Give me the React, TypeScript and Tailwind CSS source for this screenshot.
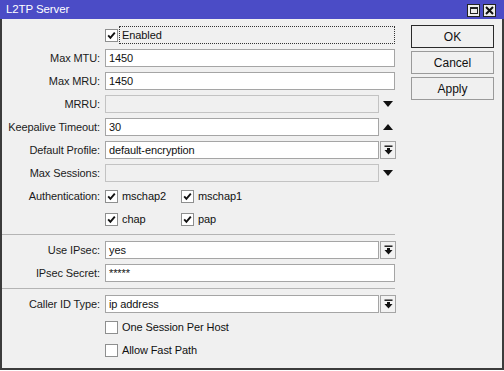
import React from "react";

const font = { fontFamily: '"Liberation Sans", Arial, sans-serif' };

function CheckBox({ checked }: { checked?: boolean }) {
    return (
        <div className="w-[13px] h-[13px] border border-[#8e8f8f] bg-white flex items-center justify-center shrink-0">
            {checked && (
                <svg width="9" height="9" viewBox="0 0 9 9">
                    <path d="M1.2 4.4 L3.4 6.8 L7.8 1.6" fill="none" stroke="#111" strokeWidth="1.9" />
                </svg>
            )}
        </div>
    );
}

function DropIcon() {
    return (
        <svg width="9" height="10" viewBox="0 0 9 10">
            <rect x="0.5" y="0.5" width="8" height="1.4" fill="#111" />
            <rect x="3" y="3" width="3" height="2.5" fill="#111" />
            <path d="M0.5 5 H8.5 L4.5 9.5 Z" fill="#111" />
        </svg>
    );
}

function Arrow({ up }: { up?: boolean }) {
    return (
        <div className="w-[17px] flex items-center justify-center">
            <svg width="10" height="6" viewBox="0 0 10 6">
                {up ? <path d="M0 6 H10 L5 0 Z" fill="#111" /> : <path d="M0 0 H10 L5 6 Z" fill="#111" />}
            </svg>
        </div>
    );
}

function Row({ label, children }: { label?: string; children: React.ReactNode }) {
    return (
        <div className="flex items-center h-[18px]">
            <div className="w-[99px] text-right text-[11px] tracking-[-0.1px] text-[#1b1b1b] pr-[1px] whitespace-nowrap">{label ? `${label}:` : ""}</div>
            <div className="ml-[4px] flex items-center">{children}</div>
        </div>
    );
}

function Input({ value, width = 290, disabled }: { value?: string; width?: number; disabled?: boolean }) {
    return (
        <div
            className={`h-[18px] border flex items-center px-[3px] text-[11px] tracking-[-0.1px] text-[#111] ${disabled ? "bg-[#f0f0f0] border-[#c3c3c3]" : "bg-white border-[#a5a5a5]"}`}
            style={{ width }}
        >
            {value}
        </div>
    );
}

function Select({ value }: { value: string }) {
    return (
        <div className="flex items-center gap-[1px]">
            <Input value={value} width={274} />
            <div className="w-[16px] h-[18px] border border-[#a5a5a5] bg-[#f2f2f2] flex items-center justify-center">
                <DropIcon />
            </div>
        </div>
    );
}

function Separator() {
    return <div className="h-[1px] my-[1px] bg-[#b4b4b4] w-[393px]" />;
}

function Button({ label, primary }: { label: string; primary?: boolean }) {
    return (
        <div
            className={`w-[83px] h-[23px] flex items-center justify-center text-[12px] text-[#111] bg-[#f0f0f0] border ${primary ? "border-[#2a2a2a]" : "border-[#9a9a9a]"}`}
        >
            {label}
        </div>
    );
}

function CheckLabel({ label, checked, w }: { label: string; checked?: boolean; w?: string }) {
    return (
        <div className={`flex items-center gap-[4px] text-[11px] tracking-[-0.1px] text-[#111] ${w ?? ""}`}>
            <CheckBox checked={checked} />
            <span>{label}</span>
        </div>
    );
}

export default function App() {
    return (
        <div className="w-[504px] h-[371px] bg-white" style={font}>
            {/* Title bar */}
            <div className="h-[19px] bg-[#4b4cc6] flex items-center justify-between pl-[6px] pr-[8px]">
                <span className="text-white text-[11.5px] tracking-[-0.1px]">L2TP Server</span>
                <div className="flex items-center gap-[3px] mt-[1px]">
                    <div className="w-[13px] h-[13px] bg-[#ececec] border border-[#222] flex items-center justify-center">
                        <div className="w-[8px] h-[7px] border border-[#222] border-t-2" />
                    </div>
                    <div className="w-[13px] h-[13px] bg-[#ececec] border border-[#222] flex items-center justify-center">
                        <svg width="9" height="9" viewBox="0 0 9 9">
                            <path d="M1 1 L8 8 M8 1 L1 8" stroke="#111" strokeWidth="2" />
                        </svg>
                    </div>
                </div>
            </div>

            {/* Body */}
            <div className="h-[351px] bg-[#f0f0f0] border-l-2 border-r-2 border-b-2 border-[#3c3c3c] flex">
                <div className="flex flex-col gap-[5px] pt-[7px] w-[400px]">
                    <Row>
                        <CheckBox checked />
                        <div className="ml-[1px] h-[18px] w-[276px] border border-dotted border-[#333] flex items-center pl-[2px] text-[11px] tracking-[-0.1px] text-[#111]">
                            Enabled
                        </div>
                    </Row>
                    <Row label="Max MTU">
                        <Input value="1450" />
                    </Row>
                    <Row label="Max MRU">
                        <Input value="1450" />
                    </Row>
                    <Row label="MRRU">
                        <Input width={274} disabled />
                        <Arrow />
                    </Row>
                    <Row label="Keepalive Timeout">
                        <Input value="30" width={274} />
                        <Arrow up />
                    </Row>
                    <Row label="Default Profile">
                        <Select value="default-encryption" />
                    </Row>
                    <Row label="Max Sessions">
                        <Input width={274} disabled />
                        <Arrow />
                    </Row>
                    <Row label="Authentication">
                        <CheckLabel label="mschap2" checked w="w-[76px]" />
                        <CheckLabel label="mschap1" checked />
                    </Row>
                    <Row>
                        <CheckLabel label="chap" checked w="w-[76px]" />
                        <CheckLabel label="pap" checked />
                    </Row>
                    <Separator />
                    <Row label="Use IPsec">
                        <Select value="yes" />
                    </Row>
                    <Row label="IPsec Secret">
                        <Input value="*****" />
                    </Row>
                    <Separator />
                    <Row label="Caller ID Type">
                        <Select value="ip address" />
                    </Row>
                    <Row>
                        <CheckLabel label="One Session Per Host" />
                    </Row>
                    <Row>
                        <CheckLabel label="Allow Fast Path" />
                    </Row>
                </div>

                {/* Buttons */}
                <div className="flex flex-col gap-[3px] pt-[6px] ml-[9px]">
                    <Button label="OK" primary />
                    <Button label="Cancel" />
                    <Button label="Apply" />
                </div>
            </div>
        </div>
    );
}
